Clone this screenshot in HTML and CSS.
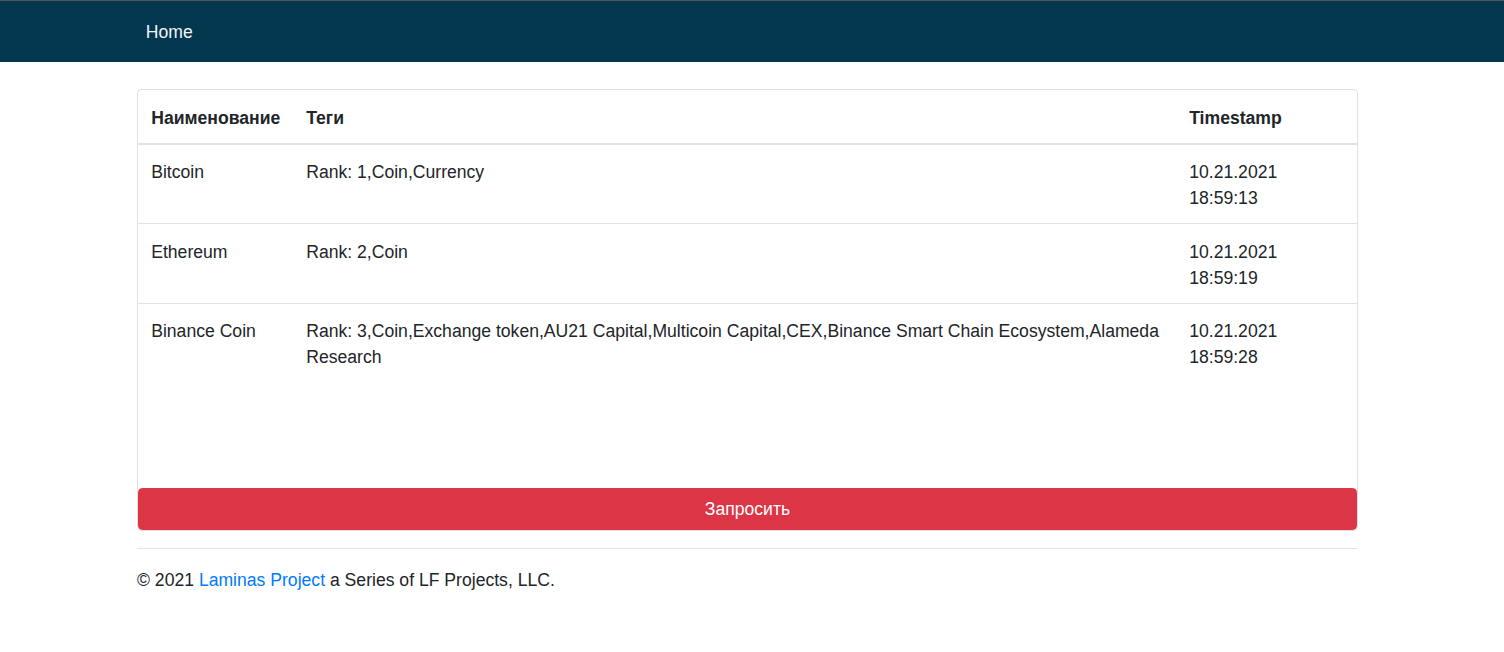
FILE: index.html
```html
<!DOCTYPE html>
<html lang="ru">
<head>
<meta charset="utf-8">
<title>Laminas</title>
<link rel="stylesheet" href="styles.css">
</head>
<body>
<header class="navbar">
  <div class="container">
    <a class="nav-link" href="#">Home</a>
  </div>
</header>
<main class="container">
  <div class="card">
    <div class="table-wrap">
      <table class="table">
        <colgroup>
          <col class="col-name">
          <col>
          <col class="col-time">
        </colgroup>
        <thead>
          <tr><th>Наименование</th><th>Теги</th><th>Timestamp</th></tr>
        </thead>
        <tbody>
          <tr><td>Bitcoin</td><td>Rank: 1,Coin,Currency</td><td>10.21.2021 18:59:13</td></tr>
          <tr><td>Ethereum</td><td>Rank: 2,Coin</td><td>10.21.2021 18:59:19</td></tr>
          <tr><td>Binance Coin</td><td>Rank: 3,Coin,Exchange token,AU21 Capital,Multicoin Capital,CEX,Binance Smart Chain Ecosystem,Alameda Research</td><td>10.21.2021 18:59:28</td></tr>
        </tbody>
      </table>
    </div>
    <button class="btn-danger" type="button">Запросить</button>
  </div>
  <hr class="divider">
  <footer class="footer">© 2021 <a href="#">Laminas Project</a> a Series of LF Projects, LLC.</footer>
</main>
</body>
</html>
```

FILE: styles.css
```css
html { font-size: 17.6px; }
* { box-sizing: border-box; }
body {
  margin: 0;
  font-family: "Liberation Sans", Arial, sans-serif;
  font-size: 1rem;
  line-height: 1.5;
  color: #212529;
  background: #fff;
}
.container {
  width: 1221px;
  margin-left: 137px;
}
.navbar {
  background: #03364f;
  border-top: 1px solid #555;
  height: 62px;
  display: flex;
  align-items: center;
}
.nav-link {
  display: inline-block;
  color: #f2f5f7;
  text-decoration: none;
  padding: 2px 0.5rem 0;
  line-height: 26.4px;
}
.card {
  margin-top: 27px;
  border: 1px solid rgba(0,0,0,.125);
  border-radius: 4.4px;
  display: flex;
  flex-direction: column;
}
.table-wrap {
  height: 398px;
  overflow: hidden;
}
.table {
  width: 100%;
  border-collapse: collapse;
  table-layout: fixed;
}
.col-name { width: 155px; }
.col-time { width: 181px; }
.table th, .table td {
  padding: 14.2px 13.2px 11.6px;
  text-align: left;
  vertical-align: top;
  border-top: 1px solid #dee2e6;
}
.table th {
  font-weight: bold;
  padding-top: 14.6px;
  padding-bottom: 11.8px;
  border-top: 0;
  border-bottom: 2px solid #dee2e6;
}
.btn-danger {
  display: block;
  width: 100%;
  font: inherit;
  color: #fff;
  background: #dc3545;
  border: 1px solid #dc3545;
  border-radius: 4.4px;
  padding: 6.6px 13.2px;
  line-height: 1.5;
  text-align: center;
  cursor: pointer;
}
.divider {
  margin: 17.6px 0 17.6px;
  border: 0;
  border-top: 1px solid rgba(0,0,0,.1);
}
.footer a {
  color: #007bff;
  text-decoration: none;
}
```
